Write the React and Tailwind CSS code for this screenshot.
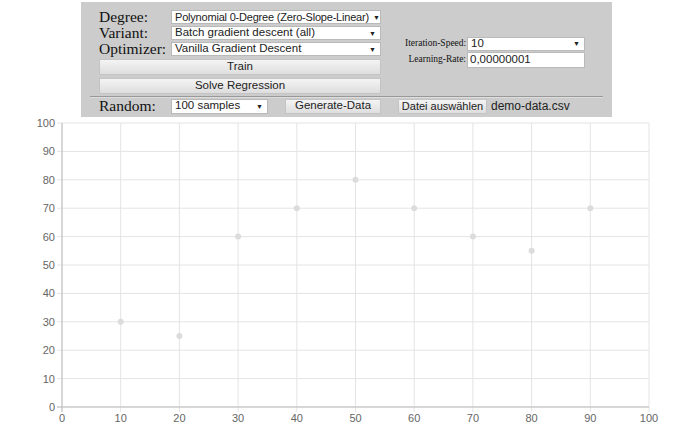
import React from 'react';

const serif = { fontFamily: '"Liberation Serif", "Times New Roman", serif' };

const xTicks = [0, 10, 20, 30, 40, 50, 60, 70, 80, 90, 100];
const yTicks = [0, 10, 20, 30, 40, 50, 60, 70, 80, 90, 100];
const points = [
  [10, 30], [20, 25], [30, 60], [40, 70], [50, 80],
  [60, 70], [70, 60], [80, 55], [90, 70],
];

const px = (v) => 62 + v * 5.87;
const py = (v) => 6 + (100 - v) * 2.84;

const Select = ({ value, className }) => (
  <div className={`flex items-center justify-between shrink-0 bg-white border border-[#b9b9b9] pl-[3px] pr-[4px] h-[14px] text-[11.5px] leading-none text-[#222] font-['Liberation_Sans',Arial,sans-serif] whitespace-nowrap overflow-hidden ${className}`}>
    <span>{value}</span>
    <span className="text-[7px] ml-1">▼</span>
  </div>
);

const Button = ({ children, className }) => (
  <div className={`flex items-center justify-center shrink-0 border border-[#c4c4c4] bg-gradient-to-b from-[#f4f4f4] to-[#dedede] text-[11.5px] leading-none text-[#222] font-['Liberation_Sans',Arial,sans-serif] whitespace-nowrap ${className}`}>
    {children}
  </div>
);

const Chart = () => (
  <svg width="698" height="306" className="block">
    {xTicks.map((t) => (
      <line key={'gx' + t} x1={px(t)} x2={px(t)} y1={py(100)} y2={py(0) + 5} stroke="#e4e4e4" strokeWidth="1" />
    ))}
    {yTicks.map((t) => (
      <line key={'gy' + t} x1={px(0) - 5} x2={px(100)} y1={py(t)} y2={py(t)} stroke="#e4e4e4" strokeWidth="1" />
    ))}
    <line x1={px(0)} x2={px(0)} y1={py(100)} y2={py(0) + 5} stroke="#bdbdbd" strokeWidth="1" />
    <line x1={px(0) - 5} x2={px(100)} y1={py(0)} y2={py(0)} stroke="#bdbdbd" strokeWidth="1" />
    {yTicks.map((t) => (
      <text key={'ly' + t} x={55} y={py(t) + 4} textAnchor="end" fontSize="11" fill="#666666" fontFamily="Liberation Sans, Arial, sans-serif">
        {t}
      </text>
    ))}
    {xTicks.map((t) => (
      <text key={'lx' + t} x={px(t)} y={305} textAnchor="middle" fontSize="11" fill="#666666" fontFamily="Liberation Sans, Arial, sans-serif">
        {t}
      </text>
    ))}
    {points.map(([x, y]) => (
      <circle key={x} cx={px(x)} cy={py(y)} r="3" fill="#dcdcdc" />
    ))}
  </svg>
);

export default function App() {
  return (
    <div className="w-[698px] h-[423px] bg-white overflow-hidden">
      <div className="ml-[81px] mt-[2px] w-[531px] h-[115px] bg-[#cccccc] flex flex-col">
        <div className="flex pl-[18px] pt-[7px]">
          <div className="w-[282px] flex flex-col">
            <div className="flex items-center h-[16px]">
              <span className="w-[72px] shrink-0 text-[15.5px] leading-none text-[#111]" style={serif}>Degree:</span>
              <Select value="Polynomial 0-Degree (Zero-Slope-Linear)" className="w-[210px] tracking-[-0.2px] text-[11px]" />
            </div>
            <div className="flex items-center h-[16px]">
              <span className="w-[72px] shrink-0 text-[15.5px] leading-none text-[#111]" style={serif}>Variant:</span>
              <Select value="Batch gradient descent (all)" className="w-[210px]" />
            </div>
            <div className="flex items-center h-[16px]">
              <span className="w-[72px] shrink-0 text-[15.5px] leading-none text-[#111]" style={serif}>Optimizer:</span>
              <Select value="Vanilla Gradient Descent" className="w-[210px]" />
            </div>
            <Button className="h-[16px] mt-[2px] w-[282px]">Train</Button>
            <Button className="h-[16px] mt-[3px] w-[282px]">Solve Regression</Button>
          </div>
          <div className="flex flex-col ml-[24px] mt-[27px]">
            <div className="flex items-center h-[15px]">
              <span className="w-[62px] shrink-0 whitespace-nowrap text-right pr-[1px] text-[9.5px] leading-none text-[#111]" style={serif}>Iteration-Speed:</span>
              <Select value="10" className="w-[118px]" />
            </div>
            <div className="flex items-center h-[16px] mt-[1px]">
              <span className="w-[62px] shrink-0 whitespace-nowrap text-right pr-[1px] text-[9.5px] leading-none text-[#111]" style={serif}>Learning-Rate:</span>
              <div className="w-[118px] h-[16px] shrink-0 bg-white border border-[#b9b9b9] px-[2px] flex items-center text-[11.5px] leading-none text-[#222] font-['Liberation_Sans',Arial,sans-serif]">
                0,00000001
              </div>
            </div>
          </div>
        </div>
        <div className="ml-[9px] mr-[9px] mt-[2px] border-t border-[#999] border-b border-b-[#ddd]" />
        <div className="flex items-center pl-[18px] h-[16px]">
          <span className="w-[72px] shrink-0 text-[15.5px] leading-none text-[#111]" style={serif}>Random:</span>
          <Select value="100 samples" className="w-[97px] h-[15px]" />
          <Button className="ml-[17px] w-[96px] h-[15px]">Generate-Data</Button>
          <Button className="ml-[17px] w-[89px] h-[15px] text-[11px]">Datei auswählen</Button>
          <span className="ml-[4px] whitespace-nowrap text-[12px] leading-none text-[#222] font-['Liberation_Sans',Arial,sans-serif]">demo-data.csv</span>
        </div>
      </div>
      <Chart />
    </div>
  );
}
